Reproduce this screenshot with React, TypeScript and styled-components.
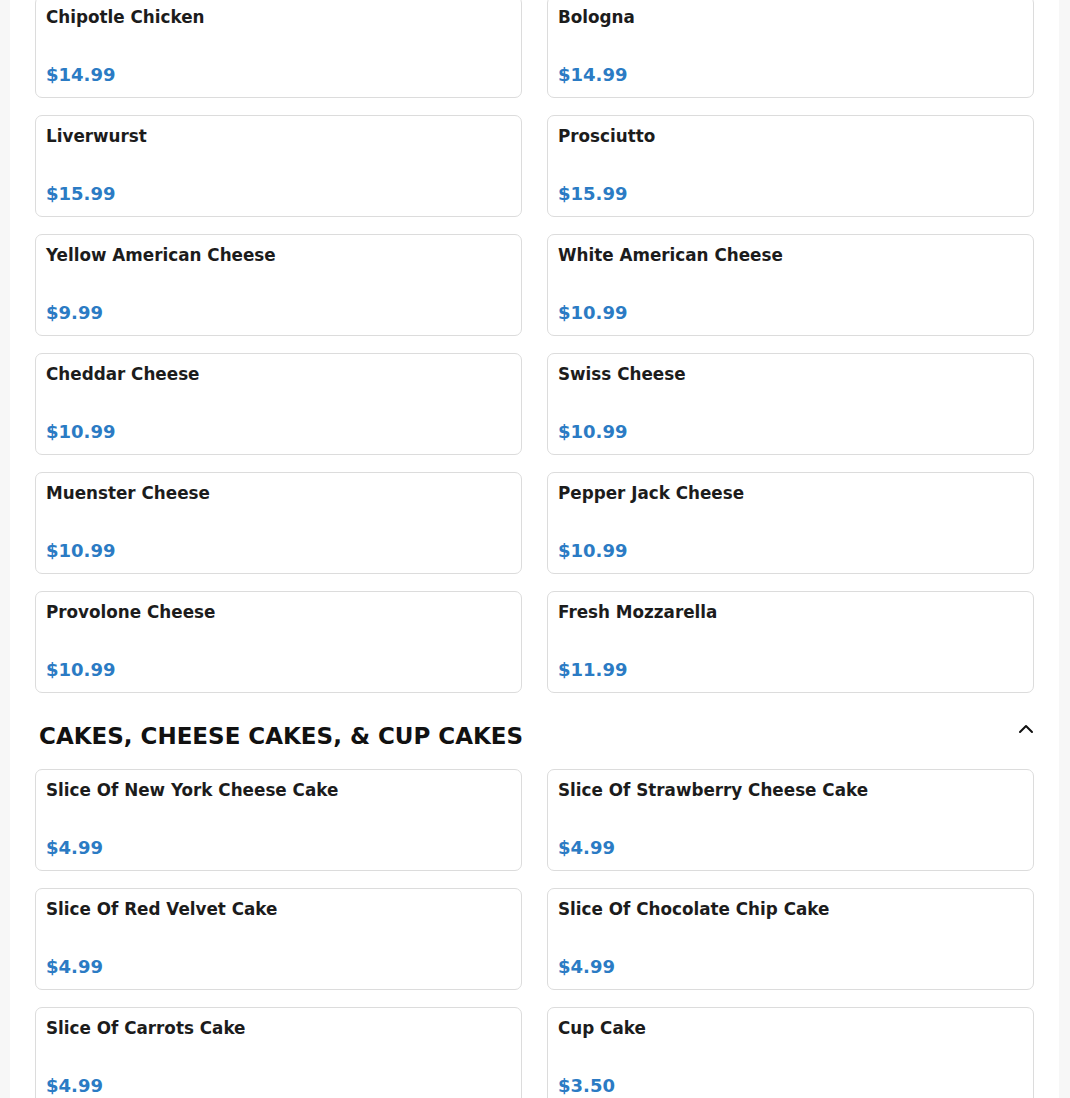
import React from "react";
import styled, { createGlobalStyle } from "styled-components";

const Global = createGlobalStyle`
  html, body { margin: 0; padding: 0; background: #f7f7f7; }
  body { font-family: "DejaVu Sans", "Liberation Sans", sans-serif; color: #1c1c1c; }
`;

const Page = styled.div`
  margin: 0 11px 0 10px;
  background: #ffffff;
  padding: 0 25px 20px;
  min-height: 1098px;
  overflow: hidden;
`;

const Grid = styled.div<{ $first?: boolean }>`
  display: grid;
  grid-template-columns: 1fr 1fr;
  column-gap: 25px;
  row-gap: 17px;
  margin-top: ${(p) => (p.$first ? "-4px" : "0")};
`;

const Card = styled.div`
  border: 1px solid #dcdcdc;
  border-radius: 7px;
  padding: 10px;
  height: 102px;
  box-sizing: border-box;
  display: flex;
  flex-direction: column;
  justify-content: space-between;
`;

const Title = styled.div`
  font-weight: 700;
  font-size: 16.8px;
  line-height: 20px;
  color: #1c1c1c;
`;

const Price = styled.div`
  font-weight: 700;
  font-size: 18px;
  line-height: 24px;
  color: #2b7bc4;
`;

const SectionHead = styled.div`
  display: flex;
  align-items: center;
  justify-content: space-between;
  padding: 28px 4px 18px 4px;
`;

const SectionTitle = styled.h2`
  margin: 0;
  font-size: 23px;
  line-height: 30px;
  font-weight: 700;
  color: #111;
`;

const Chevron = styled.svg`
  width: 24px;
  height: 24px;
  margin-top: -14px;
  margin-right: -8px;
`;

type Item = [string, string];

const meats: Item[] = [
  ["Chipotle Chicken", "$14.99"],
  ["Bologna", "$14.99"],
  ["Liverwurst", "$15.99"],
  ["Prosciutto", "$15.99"],
  ["Yellow American Cheese", "$9.99"],
  ["White American Cheese", "$10.99"],
  ["Cheddar Cheese", "$10.99"],
  ["Swiss Cheese", "$10.99"],
  ["Muenster Cheese", "$10.99"],
  ["Pepper Jack Cheese", "$10.99"],
  ["Provolone Cheese", "$10.99"],
  ["Fresh Mozzarella", "$11.99"],
];

const cakes: Item[] = [
  ["Slice Of New York Cheese Cake", "$4.99"],
  ["Slice Of Strawberry Cheese Cake", "$4.99"],
  ["Slice Of Red Velvet Cake", "$4.99"],
  ["Slice Of Chocolate Chip Cake", "$4.99"],
  ["Slice Of Carrots Cake", "$4.99"],
  ["Cup Cake", "$3.50"],
];

const Items = ({ items, first }: { items: Item[]; first?: boolean }) => (
  <Grid $first={first}>
    {items.map(([n, p]) => (
      <Card key={n}>
        <Title>{n}</Title>
        <Price>{p}</Price>
      </Card>
    ))}
  </Grid>
);

export default function App() {
  return (
    <>
      <Global />
      <Page>
        <Items items={meats} first />
        <SectionHead>
          <SectionTitle>CAKES, CHEESE CAKES, &amp; CUP CAKES</SectionTitle>
          <Chevron viewBox="0 0 24 24" fill="none" stroke="#111" strokeWidth={2} strokeLinecap="round" strokeLinejoin="round">
            <path d="M6 15l6-6 6 6" />
          </Chevron>
        </SectionHead>
        <Items items={cakes} />
      </Page>
    </>
  );
}
